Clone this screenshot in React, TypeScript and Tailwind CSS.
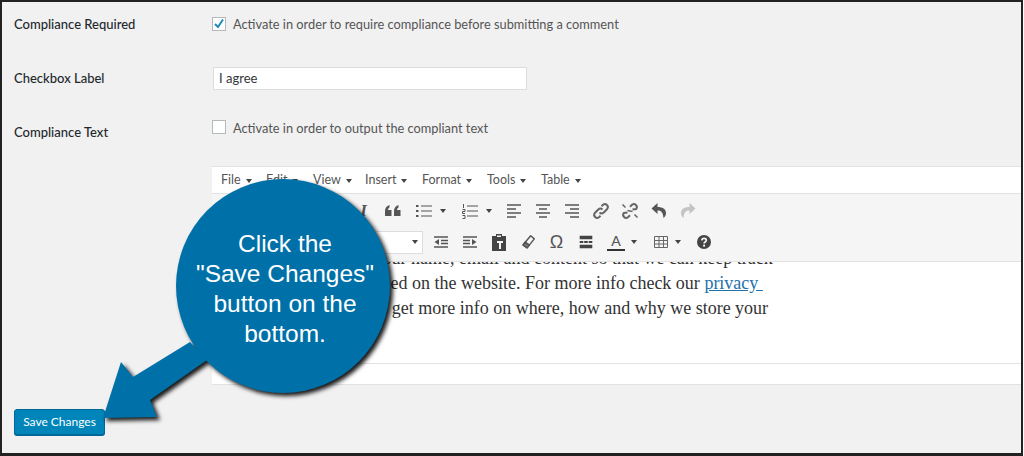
import type { ReactNode } from "react";

const ui = "font-['Lato',sans-serif]";

function Caret() {
  return <span className="inline-block border-x-[3.5px] border-t-[4px] border-x-transparent border-t-[#444]" />;
}

function Glyph({ children, stroke = "#555" }: { children: ReactNode; stroke?: string }) {
  return (
    <svg width="20" height="20" viewBox="0 0 20 20" fill="none" stroke={stroke} strokeWidth="1.8">
      {children}
    </svg>
  );
}

function Btn({ children, caret, w = "w-[29px]" }: { children: ReactNode; caret?: boolean; w?: string }) {
  return (
    <div className={`${w} h-[28px] flex items-center justify-center gap-[6px]`}>
      {children}
      {caret && <Caret />}
    </div>
  );
}

function Menu({ label, w }: { label: string; w: string }) {
  return (
    <div className={`${w} pt-[1px] flex items-center gap-[5px] text-[12.5px] text-[#555]`}>
      {label}
      <Caret />
    </div>
  );
}

export default function App() {
  return (
    <div className={`relative w-[1023px] h-[456px] overflow-hidden bg-[#f1f1f1] border-t-2 border-l-2 border-r-2 border-b-[3px] border-[#222] ${ui}`}>
      <div className="pl-[12px]">
        {/* settings rows */}
        <div className="flex h-[52px] pt-[13px]">
          <div className="w-[198px] text-[13px] leading-[18px] font-medium text-[#23282d]">Compliance Required</div>
          <div className="flex items-start gap-[7px]">
            <div className="mt-[2px] w-[14px] h-[14px] bg-white border border-[#b4b9be] flex items-center justify-center">
              <svg width="12" height="12" viewBox="0 0 12 12" fill="none" stroke="#1e8cbe" strokeWidth="2"><path d="M2 6l3 3 5-7.500" /></svg>
            </div>
            <span className="text-[12.8px] leading-[18px] text-[#555]">Activate in order to require compliance before submitting a comment</span>
          </div>
        </div>
        <div className="flex h-[54px] pt-[13px]">
          <div className="w-[199px] pt-[2px] text-[13px] leading-[18px] font-medium text-[#23282d]">Checkbox Label</div>
          <div className="w-[314px] h-[23px] px-[5px] bg-white border border-[#ddd] text-[13px] leading-[21px] text-[#32373c]">I agree</div>
        </div>
        <div className="flex h-[58px]">
          <div className="w-[198px] pt-[15px] text-[13px] leading-[18px] font-medium text-[#23282d]">Compliance Text</div>
          <div className="flex items-start gap-[7px] pt-[11px]">
            <div className="mt-[1px] w-[14px] h-[14px] bg-white border border-[#b4b9be]" />
            <span className="text-[12.8px] leading-[18px] text-[#555]">Activate in order to output the compliant text</span>
          </div>
        </div>

        {/* editor */}
        <div className="ml-[198px] border-y border-[#e2e2e2] bg-white">
          <div className="h-[27px] pl-[9px] flex items-center border-b border-[#e2e2e2]">
            <Menu label="File" w="w-[45px]" />
            <Menu label="Edit" w="w-[47px]" />
            <Menu label="View" w="w-[52px]" />
            <Menu label="Insert" w="w-[57px]" />
            <Menu label="Format" w="w-[65px]" />
            <Menu label="Tools" w="w-[54px]" />
            <Menu label="Table" w="w-[50px]" />
          </div>
          <div className="h-[68px] bg-[#f5f5f5] border-b border-[#e2e2e2]">
            <div className="h-[34px] pl-[108px] flex items-center">
              <Btn><span className="text-[16px] font-bold text-[#555]">B</span></Btn>
              <Btn><span className="font-['Liberation_Serif',serif] text-[17px] italic font-bold text-[#555]">I</span></Btn>
              <Btn>
                <svg width="20" height="20" viewBox="0 0 20 20" fill="#555"><path d="M2 15V10c0-3 1.500-5 4.500-6v2.500C5.500 7 5 8 5 9h3.500v6zM11 15V10c0-3 1.500-5 4.500-6v2.500c-1 .5-1.500 1.500-1.500 2.500h3.500v6z" /></svg>
              </Btn>
              <Btn caret w="w-[46px]">
                <Glyph>
                  <path d="M7 5h11M7 10h11M7 15h11" strokeWidth="1.200" />
                  <path d="M2 5h2.500M2 10h2.500M2 15h2.500" strokeWidth="2" />
                </Glyph>
              </Btn>
              <Btn caret w="w-[46px]">
                <Glyph>
                  <path d="M7 5h11M7 10h11M7 15h11" strokeWidth="1.200" />
                  <path d="M3.500 3v4M2.500 8.500h2.500v2H2.500v2H5M2.500 14.500H5v3H2.500" strokeWidth="1" />
                </Glyph>
              </Btn>
              <Btn><Glyph><path d="M3 4h14M3 8h9M3 12h14M3 16h9" strokeWidth="1.500" /></Glyph></Btn>
              <Btn><Glyph><path d="M3 4h14M6 8h8M3 12h14M6 16h8" strokeWidth="1.500" /></Glyph></Btn>
              <Btn><Glyph><path d="M3 4h14M8 8h9M3 12h14M8 16h9" strokeWidth="1.500" /></Glyph></Btn>
              <Btn>
                <Glyph stroke="#666"><path d="M8.500 11.500a3 3 0 0 0 4.200 0l3.500-3.500a3 3 0 0 0-4.200-4.200l-1.500 1.500" strokeWidth="2" /><path d="M11.500 8.500a3 3 0 0 0-4.200 0l-3.500 3.500a3 3 0 0 0 4.200 4.200l1.500-1.500" strokeWidth="2" /></Glyph>
              </Btn>
              <Btn>
                <Glyph stroke="#666">
                  <path d="M12.500 8.500l3.700-.5a3 3 0 0 0-4.200-4.200l-2 2M7.500 11.500l-3.700.5a3 3 0 0 0 4.200 4.200l2-2" strokeWidth="2" />
                  <path d="M2.500 3.500l3 3M17.500 16.500l-3-3M7.500 9.500l5 1" strokeWidth="1.500" />
                </Glyph>
              </Btn>
              <Btn>
                <svg width="20" height="20" viewBox="0 0 20 20" fill="#555"><path d="M8.500 2L2.500 7.500l6 5.500V9.500c3.500 0 5.500 1.500 6 7.500 1.500-1 2.500-3 2.500-5 0-4-3.500-6-8.500-6z" /></svg>
              </Btn>
              <Btn>
                <svg width="20" height="20" viewBox="0 0 20 20" fill="#c4c4c4"><path d="M11.500 2l6 5.500-6 5.500V9.500c-3.500 0-5.500 1.500-6 7.500C4 16 3 14 3 12c0-4 3.500-6 8.500-6z" /></svg>
              </Btn>
            </div>
            <div className="h-[28px] pl-[108px] flex items-center">
              <div className="w-[103px] h-[23px] mr-[3px] bg-white border border-[#ddd] flex items-center justify-end pr-[4px]"><Caret /></div>
              <Btn><Glyph><path d="M3 5h14M10 8.500h7M10 11.500h7M3 15h14" strokeWidth="1.500" /><path d="M8 7l-4.500 3 4.500 3z" fill="#555" stroke="none" /></Glyph></Btn>
              <Btn><Glyph><path d="M3 5h14M3 8.500h7M3 11.500h7M3 15h14" strokeWidth="1.500" /><path d="M12 7l4.500 3-4.500 3z" fill="#555" stroke="none" /></Glyph></Btn>
              <Btn>
                <svg width="20" height="20" viewBox="0 0 20 20" fill="#444"><path d="M3 4h4V2h6v2h4v15H3z" /><path d="M8 3.500h4V5H8zM8 9h6v2h-2v6h-2v-6H8z" fill="#f5f5f5" /></svg>
              </Btn>
              <Btn>
                <svg width="18" height="18" viewBox="0 0 20 20" fill="none" stroke="#555" strokeWidth="1.600" strokeLinejoin="round"><path d="M13 3l4 3.500-8 10-4.500-3.500z" /><path d="M4.500 13.500l4.500 3 2.500-3-4.500-3.500z" fill="#777" /></svg>
              </Btn>
              <Btn><span className="font-['Liberation_Sans',sans-serif] text-[18px] text-[#555]">Ω</span></Btn>
              <Btn>
                <svg width="18" height="18" viewBox="0 0 20 20" fill="#444"><path d="M3 3h14v4H3zM3 13h14v4H3zM3 9h4v2H3zM8 9h4v2H8zM13 9h4v2h-4z" /></svg>
              </Btn>
              <Btn caret w="w-[44px]">
                <div className="flex flex-col items-center w-[18px]">
                  <span className="text-[14px] leading-[15px] font-medium text-[#555]">A</span>
                  <span className="mt-[1px] w-[18px] h-[2px] bg-[#333]" />
                </div>
              </Btn>
              <Btn caret w="w-[45px]">
                <svg width="16" height="16" viewBox="0 0 16 16" fill="none" stroke="#666" strokeWidth="1"><path d="M1.500 2.500h13v11h-13zM1.500 6.500h13M1.500 10h13M6 2.500v11M10.500 2.500v11" /></svg>
              </Btn>
              <Btn>
                <svg width="16" height="16" viewBox="0 0 16 16"><circle cx="8" cy="8" r="7" fill="#444" /><path d="M5.800 6.300C6 4.800 7 4.300 8 4.300c1.400 0 2.300.8 2.300 1.900 0 1.800-2.200 1.700-2.200 3.200" fill="none" stroke="#f5f5f5" strokeWidth="1.700" /><circle cx="8.100" cy="11.700" r="1.100" fill="#f5f5f5" /></svg>
              </Btn>
            </div>
          </div>
          <div className="h-[102px] overflow-hidden border-b border-[#e2e2e2] pl-[26px] font-['Liberation_Serif',serif] text-[18px] leading-[25px] text-[#333]">
            <div className="-mt-[16px] whitespace-nowrap">
              <p>This form collects your name, email and content so that we can keep track</p>
              <p className="-ml-[2px]">of the comments placed on the website. For more info check our <a className="text-[#2371a8] underline">privacy&nbsp;</a></p>
              <p className="pl-[11px]">policy where you'll get more info on where, how and why we store your</p>
              <p>data.</p>
            </div>
          </div>
          <div className="h-[20px]" />
        </div>

        <div className="mt-[24px] w-[91px] h-[26px] rounded-[3px] bg-[#0085ba] border border-[#006799] text-center text-[12px] leading-[24px] text-white shadow-[0_1px_0_#006799]">
          Save Changes
        </div>
      </div>

      {/* callout over the page */}
      <svg className="absolute -left-[2px] -top-[2px] drop-shadow-[3px_3px_2px_rgba(0,0,0,0.9)]" width="1024" height="456" viewBox="0 0 1024 456">
        <path fill="#0071a8" d="M121 362L133 377L190 342L207 360L150 400L157 417L103 418Z" />
        <circle cx="283" cy="286" r="107" fill="#0071a8" />
      </svg>
      <div className="absolute left-[175px] top-[227px] w-[216px] text-center font-['Liberation_Sans',sans-serif] text-[24.5px] leading-[30px] text-white">
        Click the<br />"Save Changes"<br />button on the<br />bottom.
      </div>
    </div>
  );
}
